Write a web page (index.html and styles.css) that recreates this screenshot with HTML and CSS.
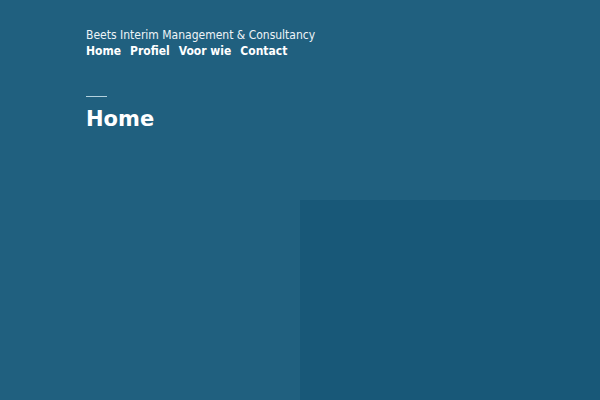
FILE: index.html
```html
<!DOCTYPE html>
<html>
<head>
<meta charset="utf-8">
<link rel="stylesheet" href="styles.css">
</head>
<body>
<div class="page">
  <header class="header">
    <div class="site-title">Beets Interim Management &amp; Consultancy</div>
    <nav class="nav">
      <a href="#">Home</a>
      <a href="#">Profiel</a>
      <a href="#">Voor wie</a>
      <a href="#">Contact</a>
    </nav>
  </header>
  <main class="content">
    <div class="rule"></div>
    <h1 class="title">Home</h1>
  </main>
  <div class="block"></div>
</div>
</body>
</html>
```
FILE: styles.css
```css
html, body {
  margin: 0;
  padding: 0;
}
body {
  background: #20607f;
  font-family: "DejaVu Sans Condensed", "DejaVu Sans", sans-serif;
  color: #ffffff;
  width: 600px;
  height: 400px;
  overflow: hidden;
}
.page {
  position: relative;
  width: 600px;
  height: 400px;
}
.header {
  padding: 28px 0 0 86px;
}
.site-title {
  font-size: 12px;
  line-height: 15px;
  color: #eef4f7;
}
.nav {
  display: flex;
  gap: 9px;
  margin-top: 1px;
}
.nav a {
  color: #ffffff;
  text-decoration: none;
  font-weight: bold;
  font-size: 12px;
  line-height: 15px;
}
.content {
  padding: 37px 0 0 86px;
}
.rule {
  width: 21px;
  height: 1px;
  background: #b4d2de;
}
.title {
  margin: 9px 0 0 0;
  font-family: "DejaVu Sans", sans-serif;
  font-size: 21px;
  line-height: 26px;
  font-weight: bold;
}
.block {
  position: absolute;
  left: 300px;
  top: 200px;
  width: 300px;
  height: 200px;
  background: #185878;
}
```
